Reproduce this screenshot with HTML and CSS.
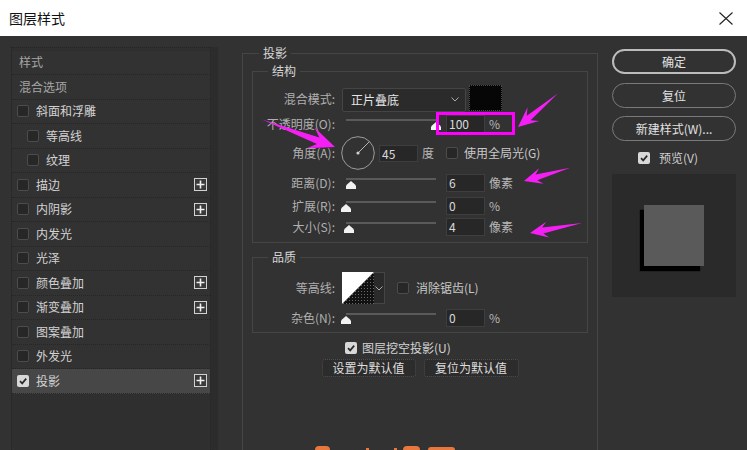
FILE: index.html
```html
<!DOCTYPE html>
<html lang="zh">
<head>
<meta charset="utf-8">
<title>图层样式</title>
<link rel="stylesheet" href="styles.css">
</head>
<body>
<div class="titlebar">
  <span class="title">图层样式</span>
  <svg class="close" viewBox="0 0 14 13"><path d="M0.5 0.5 L13.5 12.5 M13.5 0.5 L0.5 12.5" stroke="#222" stroke-width="1.1" fill="none"/></svg>
</div>
<div class="main">
  <div class="left">
    <div class="list">
      <div class="row head">样式</div>
      <div class="row head">混合选项</div>
      <div class="row"><span class="cb"></span>斜面和浮雕</div>
      <div class="row sub"><span class="cb"></span>等高线</div>
      <div class="row sub"><span class="cb"></span>纹理</div>
      <div class="row"><span class="cb"></span>描边<svg class="plus" viewBox="0 0 13 13"><rect x="0.5" y="0.5" width="12" height="12" fill="#3a3a3a" stroke="#d2d2d2"/><path d="M6.5 2.5V10.5M2.5 6.5H10.5" stroke="#f0f0f0" stroke-width="1.6"/></svg></div>
      <div class="row"><span class="cb"></span>内阴影<svg class="plus" viewBox="0 0 13 13"><rect x="0.5" y="0.5" width="12" height="12" fill="#3a3a3a" stroke="#d2d2d2"/><path d="M6.5 2.5V10.5M2.5 6.5H10.5" stroke="#f0f0f0" stroke-width="1.6"/></svg></div>
      <div class="row"><span class="cb"></span>内发光</div>
      <div class="row"><span class="cb"></span>光泽</div>
      <div class="row"><span class="cb"></span>颜色叠加<svg class="plus" viewBox="0 0 13 13"><rect x="0.5" y="0.5" width="12" height="12" fill="#3a3a3a" stroke="#d2d2d2"/><path d="M6.5 2.5V10.5M2.5 6.5H10.5" stroke="#f0f0f0" stroke-width="1.6"/></svg></div>
      <div class="row"><span class="cb"></span>渐变叠加<svg class="plus" viewBox="0 0 13 13"><rect x="0.5" y="0.5" width="12" height="12" fill="#3a3a3a" stroke="#d2d2d2"/><path d="M6.5 2.5V10.5M2.5 6.5H10.5" stroke="#f0f0f0" stroke-width="1.6"/></svg></div>
      <div class="row"><span class="cb"></span>图案叠加</div>
      <div class="row"><span class="cb"></span>外发光</div>
      <div class="row sel"><svg class="cbc" viewBox="0 0 12 12"><rect width="12" height="12" rx="2" fill="#d8d8d8"/><path d="M3 6.2 L5.2 8.4 L9.2 3.6" stroke="#2a2a2a" stroke-width="1.7" fill="none"/></svg>投影<svg class="plus" viewBox="0 0 13 13"><rect x="0.5" y="0.5" width="12" height="12" fill="#3a3a3a" stroke="#d2d2d2"/><path d="M6.5 2.5V10.5M2.5 6.5H10.5" stroke="#f0f0f0" stroke-width="1.6"/></svg></div>
    </div>
    <div class="scroll"></div>
  </div>

  <div class="center">
    <fieldset class="outer">
      <legend class="olegend">投影</legend>
      <fieldset class="group">
        <legend>结构</legend>
        <div class="frow r-blend">
          <span class="lbl">混合模式:</span>
          <div class="select"><span>正片叠底</span><svg class="chev" viewBox="0 0 8 5"><path d="M0.5 0.5 L4 4 L7.5 0.5" stroke="#aaa" fill="none"/></svg></div>
          <div class="swatch"></div>
        </div>
        <div class="frow r-opacity">
          <span class="lbl">不透明度(O):</span>
          <div class="slider"><div class="track"></div><svg class="knob" style="left:85px" viewBox="0 0 10 8"><polygon points="5,0 9,3.5 10,5 10,8 0,8 0,5 1,3.5" fill="#f2f2f2"/></svg></div>
          <div class="num">100</div><span class="unit">%</span>
        </div>
        <div class="frow r-angle">
          <span class="lbl">角度(A):</span>
          <svg class="dial" viewBox="0 0 34 34"><circle cx="17" cy="17" r="16.3" stroke="#9c9c9c" fill="none"/><path d="M17 17 L28.4 5.6" stroke="#b8b8b8" stroke-width="1"/><circle cx="17" cy="17" r="1.6" fill="#d0d0d0"/></svg>
          <div class="num small">45</div><span class="unit">度</span>
          <span class="cb gap"></span><span class="cbtext">使用全局光(G)</span>
        </div>
        <div class="frow r-dist">
          <span class="lbl">距离(D):</span>
          <div class="slider"><div class="track"></div><svg class="knob" style="left:0px" viewBox="0 0 10 8"><polygon points="5,0 9,3.5 10,5 10,8 0,8 0,5 1,3.5" fill="#f2f2f2"/></svg></div>
          <div class="num">6</div><span class="unit">像素</span>
        </div>
        <div class="frow r-spread">
          <span class="lbl">扩展(R):</span>
          <div class="slider"><div class="track"></div><svg class="knob" style="left:-5px" viewBox="0 0 10 8"><polygon points="5,0 9,3.5 10,5 10,8 0,8 0,5 1,3.5" fill="#f2f2f2"/></svg></div>
          <div class="num">0</div><span class="unit">%</span>
        </div>
        <div class="frow r-size">
          <span class="lbl">大小(S):</span>
          <div class="slider"><div class="track"></div><svg class="knob" style="left:-2px" viewBox="0 0 10 8"><polygon points="5,0 9,3.5 10,5 10,8 0,8 0,5 1,3.5" fill="#f2f2f2"/></svg></div>
          <div class="num">4</div><span class="unit">像素</span>
        </div>
      </fieldset>

      <fieldset class="group quality">
        <legend>品质</legend>
        <div class="frow r-contour">
          <span class="lbl">等高线:</span>
          <div class="contour">
            <svg class="cswatch" viewBox="0 0 32 32"><defs><pattern id="dots" width="3" height="3" patternUnits="userSpaceOnUse"><rect width="3" height="3" fill="#111"/><rect x="1" y="1" width="1" height="1" fill="#6a6a6a"/></pattern></defs><rect width="32" height="32" fill="#fff"/><polygon points="0,32 32,0 32,32" fill="url(#dots)"/></svg>
            <div class="dd"><svg class="chev" viewBox="0 0 8 5"><path d="M0.5 0.5 L4 4 L7.5 0.5" stroke="#aaa" fill="none"/></svg></div>
          </div>
          <span class="cb gap2"></span><span class="cbtext">消除锯齿(L)</span>
        </div>
        <div class="frow r-noise">
          <span class="lbl">杂色(N):</span>
          <div class="slider"><div class="track"></div><svg class="knob" style="left:-5px" viewBox="0 0 10 8"><polygon points="5,0 9,3.5 10,5 10,8 0,8 0,5 1,3.5" fill="#f2f2f2"/></svg></div>
          <div class="num">0</div><span class="unit">%</span>
        </div>
      </fieldset>

      <div class="knock"><svg class="cbc" viewBox="0 0 12 12"><rect width="12" height="12" rx="2" fill="#d8d8d8"/><path d="M3 6.2 L5.2 8.4 L9.2 3.6" stroke="#2a2a2a" stroke-width="1.7" fill="none"/></svg><span class="cbtext light">图层挖空投影(U)</span></div>
      <div class="btns">
        <div class="dbtn w94">设置为默认值</div>
        <div class="dbtn w95">复位为默认值</div>
      </div>
    </fieldset>
  </div>

  <div class="right">
    <div class="rbtn primary">确定</div>
    <div class="rbtn b2">复位</div>
    <div class="rbtn b3">新建样式(W)...</div>
    <div class="prevrow"><svg class="cbc" viewBox="0 0 12 12"><rect width="12" height="12" rx="2" fill="#d8d8d8"/><path d="M3 6.2 L5.2 8.4 L9.2 3.6" stroke="#2a2a2a" stroke-width="1.7" fill="none"/></svg><span class="prevtext">预览(V)</span></div>
    <div class="preview"><div class="psquare"></div></div>
  </div>
</div>

<div class="magbox"></div>
<svg class="annot" viewBox="0 0 747 450">
  <g fill="#f51ff5">
    <polygon transform="translate(518,127) rotate(-40)" points="0,0 20,-9 14,-3 52,0 14,3 20,9"/>
    <polygon transform="translate(335,147) rotate(-159.4)" points="0,0 26,-11 18,-3.5 78,0 18,3.5 26,11"/>
    <polygon transform="translate(524,181) rotate(-16)" points="0,0 18,-8 13,-3 48,0 13,3 18,8"/>
    <polygon transform="translate(530,233) rotate(-11)" points="0,0 18,-8 13,-3 53,0 13,3 18,8"/>
  </g>
</svg>
<div class="wm wm1"></div>
<div class="wm wm2"></div>
<div class="wm wm3"></div>
<div class="wm wm4"></div>
<div class="wm wm5"></div>
</body>
</html>
```

FILE: styles.css
```css
* { box-sizing: border-box; }
html, body { margin: 0; padding: 0; }
body {
  width: 747px;
  height: 450px;
  overflow: hidden;
  position: relative;
  background: #323232;
  font-family: "Noto Sans CJK SC", "Noto Sans", sans-serif;
  font-size: 12px;
  line-height: 16px;
  color: #b2b2b2;
}

/* title bar */
.titlebar {
  height: 36px;
  background: #ffffff;
  display: flex;
  align-items: center;
  justify-content: space-between;
  padding: 0 14px 0 9px;
}
.title { font-size: 14px; line-height: 20px; color: #111; }
.close { width: 14px; height: 13px; display: block; }

.main { display: flex; height: 414px; overflow: hidden; padding-left: 11px; }

/* left list */
.left { display: flex; margin-top: 11px; height: 403px; }
.list {
  width: 200px;
  height: 403px;
  background: #2f2f2f;
  border: 1px dotted #242424;
  border-bottom: none;
  padding-top: 2.5px;
}
.row {
  height: 24.5px;
  display: flex;
  align-items: center;
  padding-left: 5px;
  border-bottom: 1px dotted #262626;
  background: #323232;
  color: #d2d2d2;
}
.row.head { padding-left: 7px; color: #a6a6a6; }
.row.sub { padding-left: 15px; }
.row.sel { background: #474747; }
.cb {
  width: 12px;
  height: 12px;
  flex: none;
  margin-right: 7px;
  border: 1px solid #4c4c4c;
  border-radius: 2px;
  background: #272727;
}
.cbc { width: 12px; height: 12px; flex: none; margin-right: 7px; display: block; }
.plus { width: 13px; height: 13px; margin-left: auto; margin-right: 3px; flex: none; }
.scroll { width: 7px; height: 403px; background: #2c2c2c; }

/* center */
.center { margin-left: 24px; margin-top: 9px; width: 356px; flex: none; }
fieldset { margin: 0; min-width: 0; }
legend {
  font-size: 12px;
  line-height: 16px;
  color: #d6d6d6;
  padding: 0 4px;
  margin-left: 15px;
}
.outer {
  width: 356px;
  height: 405px;
  border: 1px solid #454545;
  border-bottom: none;
  padding: 2px 9px 0 9px;
}
.olegend { margin-left: 7px; }
.group {
  border: 1px solid #454545;
  padding: 0 0 6px 0;
}
.quality { margin-top: 6px; padding-bottom: 5px; }

.frow { display: flex; align-items: center; }
.lbl { width: 82px; flex: none; text-align: right; color: #b0b0b0; }

.r-blend { margin-top: 6px; height: 27px; }
.r-opacity { margin-top: 3px; height: 18px; }
.r-angle { margin-top: 3px; height: 34px; }
.r-dist { margin-top: 4px; height: 18px; }
.r-spread { margin-top: 5px; height: 18px; }
.r-size { margin-top: 3px; height: 18px; }
.r-contour { margin-top: 7px; height: 32px; }
.r-noise { margin-top: 5px; height: 18px; }

.select {
  width: 124px;
  height: 24px;
  margin-left: 7px;
  margin-top: 2px;
  background: #2b2b2b;
  border: 1px solid #454545;
  border-radius: 2px;
  display: flex;
  align-items: center;
  justify-content: space-between;
  padding: 0 6px 0 8px;
  color: #e6e6e6;
}
.chev { width: 8px; height: 5px; display: block; }
.swatch {
  width: 33px;
  height: 26px;
  margin-left: 3px;
  margin-top: -1px;
  background: #060606;
  border: 1px dotted #4a4a4a;
}

.slider {
  position: relative;
  width: 90px;
  height: 18px;
  margin-left: 11px;
  flex: none;
  align-self: flex-start;
}
.track { margin-top: 4px; height: 2px; background: #5a5a5a; }
.knob { position: absolute; top: 7px; width: 10px; height: 8px; display: block; }

.num {
  width: 39px;
  height: 18px;
  margin-left: 10px;
  flex: none;
  background: #272727;
  border: 1px solid #3e3e3e;
  color: #dadada;
  padding-left: 2px;
  line-height: 16px;
}
.num.small { height: 17px; margin-left: 4px; }
.unit { margin-left: 4px; color: #b8b8b8; }
.dial { width: 34px; height: 34px; margin-left: 6px; flex: none; display: block; }
.cb.gap { margin-left: 12px; margin-right: 6px; }
.cb.gap2 { margin-left: 12px; margin-right: 7px; }
.cbtext { color: #c8c8c8; }
.cbtext.light { color: #d4d4d4; }

.contour { display: flex; margin-left: 7px; height: 32px; }
.cswatch { width: 32px; height: 32px; display: block; }
.dd {
  width: 11px;
  height: 32px;
  border: 1px solid #454545;
  border-left: none;
  background: #2a2a2a;
  display: flex;
  align-items: center;
  justify-content: center;
}

.knock {
  display: flex;
  align-items: center;
  height: 16px;
  margin-top: 7px;
  padding-left: 93px;
}
.knock .cbc { margin-right: 5px; }
.btns { display: flex; justify-content: center; gap: 8px; margin-top: 3px; }
.dbtn {
  height: 18px;
  background: #2c2c2c;
  border: 1px dotted #4f4f4f;
  border-radius: 3px;
  color: #dedede;
  text-align: center;
  line-height: 16px;
}
.w94 { width: 94px; }
.w95 { width: 95px; }

/* right */
.right { margin-left: 14px; margin-top: 13px; width: 124px; flex: none; }
.rbtn {
  height: 25px;
  border: 1px solid #7a7a7a;
  border-radius: 13px;
  display: flex;
  align-items: center;
  justify-content: center;
  color: #e2e2e2;
}
.rbtn.primary { border: 2px solid #bcbcbc; }
.rbtn.b2 { margin-top: 9px; }
.rbtn.b3 { margin-top: 8px; }
.prevrow {
  display: flex;
  align-items: center;
  height: 14px;
  margin-top: 10px;
  padding-left: 26px;
}
.prevrow .cbc { margin-right: 9px; }
.prevtext { color: #d0d0d0; }
.preview {
  margin-top: 9px;
  height: 123px;
  background: #2a2a2a;
  padding: 31px 0 0 32px;
}
.psquare {
  width: 60px;
  height: 61px;
  background: #5a5a5a;
  box-shadow: -4px 5px 1px #000;
}

/* annotations */
.magbox {
  position: absolute;
  left: 436px;
  top: 112px;
  width: 79px;
  height: 23px;
  border: 3px solid #ff00ff;
}
.annot { position: absolute; left: 0; top: 0; width: 747px; height: 450px; pointer-events: none; }

.wm { position: absolute; background: #e8773d; }
.wm1 { left: 315px; top: 446px; width: 15px; height: 4px; border-radius: 7px 7px 0 0; }
.wm2 { left: 366px; top: 448px; width: 3px; height: 2px; }
.wm3 { left: 394px; top: 448px; width: 3px; height: 2px; }
.wm4 { left: 403px; top: 446px; width: 17px; height: 4px; border-radius: 6px 6px 0 0; }
.wm5 { left: 428px; top: 447px; width: 27px; height: 3px; border-radius: 3px 3px 0 0; }
```
